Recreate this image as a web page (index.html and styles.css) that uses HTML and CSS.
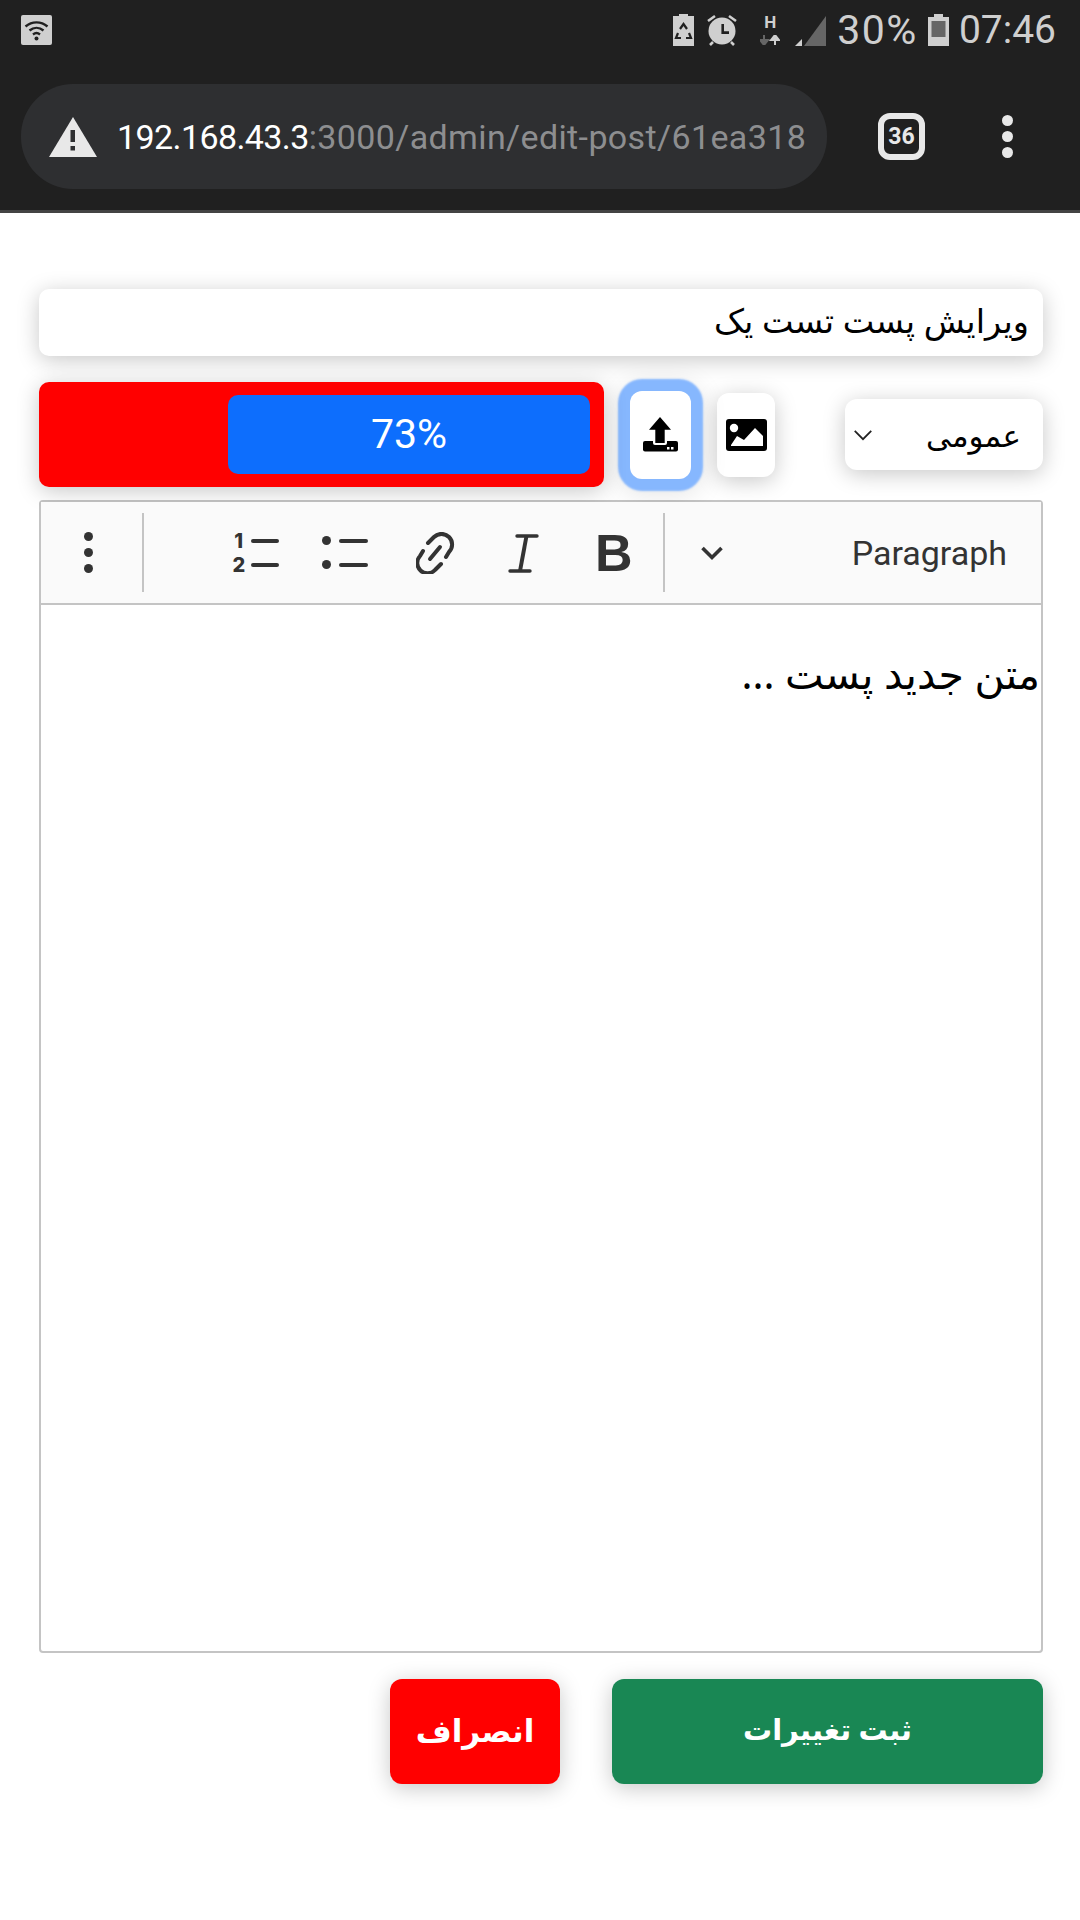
FILE: index.html
```html
<!DOCTYPE html>
<html lang="fa">
<head>
  <meta charset="UTF-8" />
  <meta name="viewport" content="width=device-width, initial-scale=1.0" />
  <title>ویرایش پست</title>
  <link rel="stylesheet" href="styles.css">
</head>
<body>
  <header class="chrome">
    <div class="statusbar">
      <svg class="wifi-icon" viewBox="0 0 31 31" width="31" height="31">
        <rect width="31" height="30" rx="2" fill="#cfcfcf"/>
        <g fill="none" stroke="#202020" stroke-width="2.4">
          <path d="M4.500 11.500c6.500-5.500 15.500-5.500 22 0"/>
          <path d="M8.500 15.500c4.200-3.500 9.800-3.500 14 0"/>
          <path d="M12 19.500c2-1.600 5-1.600 7 0"/>
        </g>
        <circle cx="15.500" cy="23.500" r="2" fill="#202020"/>
      </svg>
      <div class="status-right">
        <svg viewBox="0 0 21 32" width="21" height="32">
          <path d="M6 0h9v2h6v30H0V2h6z" fill="#cfcfcf"/>
          <path d="M7 15l3.500-5 3.500 5M5 19l-2 5h5M16 19l2 5h-5" fill="none" stroke="#202020" stroke-width="2.200"/>
        </svg>
        <svg class="ml-13" viewBox="0 0 30 32" width="30" height="32">
          <circle cx="15" cy="17" r="13.500" fill="#cfcfcf"/>
          <path d="M1 7l7-5M29 7l-7-5M3 31l3-3M27 31l-3-3" stroke="#cfcfcf" stroke-width="2.600"/>
          <path d="M15.700 10v8.600H22" fill="none" stroke="#202020" stroke-width="2.600"/>
        </svg>
        <div class="net ml-23">
          <span class="h-mark">H</span>
          <svg viewBox="0 0 20 10" width="20" height="10">
            <path d="M4 0v6M0 5l4 5 4-5z" stroke="#666" stroke-width="2" fill="#666"/>
            <path d="M15 10V4M11 5l4-5 4 5z" stroke="#cfcfcf" stroke-width="2" fill="#cfcfcf"/>
          </svg>
        </div>
        <svg class="ml-15" viewBox="0 0 31 31" width="31" height="31">
          <path d="M9 31L31 1v30z" fill="#666"/>
          <path d="M0 31l7-7v7z" fill="#cfcfcf"/>
        </svg>
        <span class="status-text percent ml-11">30%</span>
        <svg class="ml-10" viewBox="0 0 21 32" width="21" height="32">
          <path d="M6 0h9v3h6v29H0V3h6z" fill="#cfcfcf"/>
          <rect x="3.500" y="7" width="14" height="16" fill="#666"/>
        </svg>
        <span class="status-text ml-10">07:46</span>
      </div>
    </div>
    <div class="urlbar">
      <div class="url-pill">
        <svg viewBox="0 0 48 40" width="48" height="40">
          <path d="M24 0l24 40H0z" fill="#e8e8e8"/>
          <rect x="21.500" y="13" width="4.500" height="12" fill="#2e2f31"/>
          <rect x="21.500" y="29" width="4.500" height="4.500" fill="#2e2f31"/>
        </svg>
        <span class="url-text"><span class="url-host">192.168.43.3</span>:3000/admin/edit-post/61ea318</span>
      </div>
      <div class="tab-count">36</div>
      <div class="more-dots"><i></i><i></i><i></i></div>
    </div>
  </header>

  <main class="page" dir="rtl">
    <input class="title-input" type="text" value="ویرایش پست تست یک" />

    <div class="media-row">
      <div class="select-box">
        <span>عمومی</span>
        <svg viewBox="0 0 16 16" width="22" height="22"><path d="M2 5l6 6 6-6" fill="none" stroke="#222" stroke-width="1.300"/></svg>
      </div>
      <button class="icon-btn image-btn">
        <svg viewBox="0 0 41 32" width="41" height="32">
          <rect width="41" height="32" rx="3"/>
          <circle cx="8" cy="9" r="4.200" fill="#fff"/>
          <path d="M5 27v-1l6-9 7 4 11-12 8 8v10z" fill="#fff"/>
        </svg>
      </button>
      <button class="icon-btn upload-btn">
        <svg viewBox="0 0 35 35" width="35" height="35">
          <rect y="24" width="35" height="10.500" rx="2"/>
          <path d="M10 24v2a2 2 0 0 0 2 2h10a2 2 0 0 0 2-2v-2z" fill="#fff"/>
          <path d="M17 0l11 12.700h-6.300V26H12.300V12.700H6z"/>
          <rect x="24" y="30" width="2.500" height="2.500" fill="#fff"/>
          <rect x="28" y="30" width="2.500" height="2.500" fill="#fff"/>
        </svg>
      </button>
      <div class="progress">
        <div class="progress-bar" dir="ltr">73%</div>
      </div>
    </div>

    <section class="editor">
      <div class="toolbar" dir="ltr">
        <div class="more-dots dark"><i></i><i></i><i></i></div>
        <span class="tool-sep first"></span>
        <div class="tool-group">
          <div class="tool">
            <div class="list-icon">
              <span>1</span><i></i>
              <span>2</span><i></i>
            </div>
          </div>
          <div class="tool">
            <div class="list-icon bullets">
              <b></b><i></i>
              <b></b><i></i>
            </div>
          </div>
          <div class="tool link-tool">
            <svg viewBox="0 0 40 42" width="40" height="42">
              <g fill="none" stroke="#333" stroke-width="4" stroke-linecap="round">
                <path d="M12 11l6-6a10.500 10.500 0 0 1 15 15l-3 5"/>
                <path d="M7 19l-3 5a10 10 0 0 0 15 14l6-6"/>
                <path d="M14 27l10-12"/>
              </g>
            </svg>
          </div>
          <div class="tool">
            <svg viewBox="0 0 32 42" width="32" height="42">
              <path d="M9 4h20M2 39h20" fill="none" stroke="#333" stroke-width="3.400" stroke-linecap="round"/>
              <path d="M18.500 4L12 39" fill="none" stroke="#333" stroke-width="4"/>
            </svg>
          </div>
          <div class="tool bold">B</div>
        </div>
        <span class="tool-sep"></span>
        <svg class="heading-chevron" viewBox="0 0 24 16" width="24" height="16"><path d="M2.500 3l9.500 9.500L21.500 3" fill="none" stroke="#333" stroke-width="3.600"/></svg>
        <span class="heading-label">Paragraph</span>
      </div>
      <div class="editor-body">
        <p>متن جدید پست ...</p>
      </div>
    </section>

    <div class="actions">
      <button class="action-btn save-btn">ثبت تغییرات</button>
      <button class="action-btn cancel-btn">انصراف</button>
    </div>
  </main>
</body>
</html>
```

FILE: styles.css
```css
* {
  box-sizing: border-box;
}
html, body {
  margin: 0;
  height: 100%;
}
body {
  background: #fff;
  font-family: "Noto Sans", "DejaVu Sans", sans-serif;
  color: #000;
}

/* browser chrome */
.chrome {
  height: 213px;
  background: #202020;
  border-bottom: 3px solid #444;
  padding: 0 21px;
}
.statusbar {
  display: flex;
  justify-content: space-between;
  align-items: center;
  height: 60px;
  padding-right: 3px;
}
.status-right {
  display: flex;
  align-items: center;
}
.status-right svg {
  display: block;
}
.status-text {
  font: 39px Roboto, sans-serif;
  color: #cfcfcf;
}
.percent {
  font-size: 41px;
  letter-spacing: 1.5px;
}
.net {
  display: flex;
  flex-direction: column;
  align-items: center;
  gap: 6px;
  width: 20px;
}
.h-mark {
  font: bold 17px/14px Roboto, sans-serif;
  color: #cfcfcf;
}
.ml-10 { margin-left: 10px; }
.ml-11 { margin-left: 11px; }
.ml-13 { margin-left: 13px; }
.ml-15 { margin-left: 15px; }
.ml-23 { margin-left: 23px; }

.urlbar {
  display: flex;
  align-items: center;
  margin-top: 24px;
}
.url-pill {
  display: flex;
  align-items: center;
  gap: 20px;
  width: 806px;
  height: 105px;
  padding-left: 28px;
  border-radius: 52px;
  background: #2e2f31;
}
.url-text {
  font: 34px Roboto, sans-serif;
  letter-spacing: .38px;
  color: #8d8e90;
  white-space: nowrap;
}
.url-host {
  color: #fff;
  letter-spacing: -.6px;
}
.tab-count {
  width: 47px;
  height: 47px;
  margin-left: 51px;
  border: 6px solid #e8e8e8;
  border-radius: 12px;
  color: #e8e8e8;
  font: bold 23px/35px Roboto, sans-serif;
  text-align: center;
}
.more-dots {
  display: flex;
  flex-direction: column;
  gap: 5px;
  margin-left: 77px;
}
.more-dots i {
  width: 11px;
  height: 11px;
  border-radius: 50%;
  background: #e8e8e8;
}

/* form */
.page {
  padding: 76px 37px 0 39px;
}
.title-input {
  display: block;
  width: 100%;
  height: 67px;
  padding: 0 14px 5px;
  border: 0;
  border-radius: 10px;
  background: #fff;
  font: 33.500px "Noto Sans", "DejaVu Sans", sans-serif;
  color: #000;
  box-shadow: 0 4px 22px rgba(0, 0, 0, .22);
  outline: none;
}

.media-row {
  display: flex;
  align-items: center;
  margin-top: 26px;
  height: 105px;
}
.select-box {
  display: flex;
  align-items: center;
  justify-content: space-between;
  width: 198px;
  height: 71px;
  padding: 0 22px 0 7px;
  border-radius: 12px;
  font-size: 31px;
  box-shadow: 0 4px 22px rgba(0, 0, 0, .22);
}
.icon-btn {
  display: flex;
  align-items: center;
  justify-content: center;
  padding: 0;
  border: 0;
  border-radius: 12px;
  background: #fff;
}
.image-btn {
  width: 58px;
  height: 84px;
  margin-right: 70px;
  box-shadow: 0 4px 22px rgba(0, 0, 0, .22);
}
.upload-btn {
  width: 61px;
  height: 88px;
  margin-right: 26px;
  box-shadow: 0 0 2px 12px #86b7fe, 0 4px 26px 12px rgba(0, 0, 0, .1);
}
.progress {
  flex: 0 0 565px;
  height: 105px;
  margin-right: 26px;
  padding: 13px 14px;
  border-radius: 10px;
  background: #f00;
  box-shadow: 0 4px 22px rgba(0, 0, 0, .22);
}
.progress-bar {
  width: 362px;
  height: 79px;
  border-radius: 10px;
  background: #0d6efd;
  color: #fff;
  font: 41px/79px Roboto, sans-serif;
  text-align: center;
}

/* editor */
.editor {
  display: flex;
  flex-direction: column;
  height: 1153px;
  margin-top: 13px;
  border: 2px solid #c4c4c4;
  border-radius: 4px;
}
.toolbar {
  display: flex;
  align-items: center;
  height: 103px;
  padding: 0 34px 0 43px;
  background: #fafafa;
  border-bottom: 2px solid #c4c4c4;
}
.more-dots.dark {
  margin-left: 0;
  gap: 7px;
}
.more-dots.dark i {
  width: 9px;
  height: 9px;
  background: #333;
}
.tool-sep {
  width: 2px;
  height: 79px;
  margin-left: 4px;
  background: #c4c4c4;
}
.tool-sep.first {
  margin-left: 49px;
}
.tool-group {
  display: flex;
  margin-left: 67px;
}
.tool {
  display: flex;
  align-items: center;
  justify-content: center;
  width: 89.500px;
  height: 48px;
}
.tool svg {
  display: block;
}
.link-tool svg {
  margin-left: 3px;
}
.list-icon {
  display: grid;
  grid-template-columns: 12px 28px;
  grid-auto-rows: 24px;
  column-gap: 6px;
  align-items: center;
  justify-items: center;
  font: 800 20px/24px Inter, sans-serif;
  color: #333;
}
.list-icon i {
  width: 28px;
  height: 4px;
  border-radius: 2px;
  background: #333;
}
.list-icon.bullets {
  grid-template-columns: 9px 29px;
  column-gap: 8px;
}
.list-icon.bullets i {
  width: 29px;
}
.list-icon b {
  width: 9px;
  height: 9px;
  border-radius: 50%;
  background: #333;
}
.bold {
  font: bold 52px/48px "Liberation Sans", sans-serif;
  color: #333;
}
.heading-chevron {
  margin-left: 35px;
}
.heading-label {
  margin-left: auto;
  font: 34px Roboto, sans-serif;
  color: #333;
}
.editor-body {
  flex: 1;
  padding: 0 1px;
}
.editor-body p {
  margin: 46px 0 0;
  font-size: 41px;
  line-height: 44px;
}

.actions {
  display: flex;
  gap: 52px;
  margin-top: 26px;
}
.action-btn {
  height: 105px;
  border: 0;
  border-radius: 12px;
  color: #fff;
  font: bold 29px "Noto Sans", "DejaVu Sans", sans-serif;
  box-shadow: 0 4px 22px rgba(0, 0, 0, .22);
}
.save-btn {
  width: 431px;
  padding-bottom: 8px;
  background: #198754;
}
.cancel-btn {
  width: 170px;
  padding-bottom: 5px;
  font-size: 31px;
  background: #f00;
}
```
